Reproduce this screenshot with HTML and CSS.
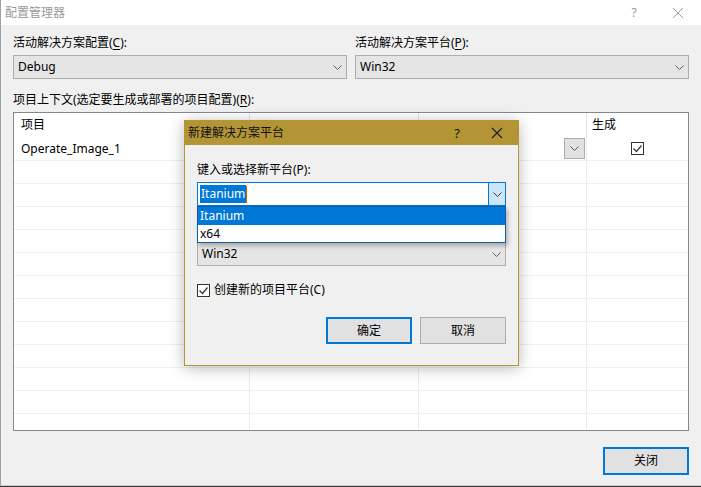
FILE: index.html
```html
<!DOCTYPE html>
<html lang="zh-CN">
<head>
<meta charset="utf-8">
<title>配置管理器</title>
<link rel="stylesheet" href="styles.css">
</head>
<body>
<div class="window">
  <div class="titlebar">
    <span class="title">配置管理器</span>
    <span class="tb-buttons">
      <span class="tb-help">?</span>
      <svg class="tb-close" width="12" height="12" viewBox="0 0 12 12"><path d="M1 1L11 11M11 1L1 11" stroke="#9a9a9a" stroke-width="1"/></svg>
    </span>
  </div>
  <div class="body">
    <div class="top-row">
      <div class="field">
        <div class="label">活动解决方案配置(<u>C</u>):</div>
        <div class="combo"><span>Debug</span><svg class="chev" width="9" height="5" viewBox="0 0 9 5"><path d="M0.5 0.5L4.5 4.5L8.5 0.5" fill="none" stroke="#606060"/></svg></div>
      </div>
      <div class="field">
        <div class="label">活动解决方案平台(<u>P</u>):</div>
        <div class="combo"><span>Win32</span><svg class="chev" width="9" height="5" viewBox="0 0 9 5"><path d="M0.5 0.5L4.5 4.5L8.5 0.5" fill="none" stroke="#606060"/></svg></div>
      </div>
    </div>
    <div class="label label-grid">项目上下文(选定要生成或部署的项目配置)(<u>R</u>):</div>
    <div class="grid">
      <div class="grow ghead">
        <div class="cell">项目</div>
        <div class="cell"></div>
        <div class="cell"></div>
        <div class="cell">生成</div>
      </div>
      <div class="grow gfirst">
        <div class="cell">Operate_Image_1</div>
        <div class="cell"></div>
        <div class="cell cell-drop"><span class="mini-drop"><svg width="9" height="5" viewBox="0 0 9 5"><path d="M0.5 0.5L4.5 4.5L8.5 0.5" fill="none" stroke="#606060"/></svg></span></div>
        <div class="cell cell-check"><span class="gcheck"><svg width="11" height="11" viewBox="0 0 11 11"><path d="M1.5 5.5L4.5 8.5L9.5 2.5" fill="none" stroke="#333" stroke-width="1.2"/></svg></span></div>
      </div>
      <div class="grow"><div class="cell"></div><div class="cell"></div><div class="cell"></div><div class="cell"></div></div>
      <div class="grow"><div class="cell"></div><div class="cell"></div><div class="cell"></div><div class="cell"></div></div>
      <div class="grow"><div class="cell"></div><div class="cell"></div><div class="cell"></div><div class="cell"></div></div>
      <div class="grow"><div class="cell"></div><div class="cell"></div><div class="cell"></div><div class="cell"></div></div>
      <div class="grow"><div class="cell"></div><div class="cell"></div><div class="cell"></div><div class="cell"></div></div>
      <div class="grow"><div class="cell"></div><div class="cell"></div><div class="cell"></div><div class="cell"></div></div>
      <div class="grow"><div class="cell"></div><div class="cell"></div><div class="cell"></div><div class="cell"></div></div>
      <div class="grow"><div class="cell"></div><div class="cell"></div><div class="cell"></div><div class="cell"></div></div>
      <div class="grow"><div class="cell"></div><div class="cell"></div><div class="cell"></div><div class="cell"></div></div>
      <div class="grow"><div class="cell"></div><div class="cell"></div><div class="cell"></div><div class="cell"></div></div>
      <div class="grow"><div class="cell"></div><div class="cell"></div><div class="cell"></div><div class="cell"></div></div>
      <div class="grow"><div class="cell"></div><div class="cell"></div><div class="cell"></div><div class="cell"></div></div>
    </div>
    <div class="footer">
      <button class="btn btn-default btn-close">关闭</button>
    </div>
  </div>

  <div class="dialog">
    <div class="dlg-title">
      <span>新建解决方案平台</span>
      <span class="dlg-tb">
        <span class="dlg-help">?</span>
        <svg width="12" height="12" viewBox="0 0 12 12"><path d="M1 1L11 11M11 1L1 11" stroke="#1a1a1a" stroke-width="1.1"/></svg>
      </span>
    </div>
    <div class="dlg-body">
      <div class="label">键入或选择新平台(P):</div>
      <div class="combo combo-edit">
        <span class="edit-text"><span class="sel">Itanium</span><span class="caret"></span></span>
        <span class="edit-btn"><svg width="9" height="5" viewBox="0 0 9 5"><path d="M0.5 0.5L4.5 4.5L8.5 0.5" fill="none" stroke="#404040"/></svg></span>
      </div>
      <div class="combo combo-copy"><span>Win32</span><svg class="chev" width="9" height="5" viewBox="0 0 9 5"><path d="M0.5 0.5L4.5 4.5L8.5 0.5" fill="none" stroke="#606060"/></svg></div>
      <label class="check-row"><span class="check"><svg width="11" height="11" viewBox="0 0 11 11"><path d="M1.5 5.5L4.5 8.5L9.5 2.5" fill="none" stroke="#333" stroke-width="1.2"/></svg></span>创建新的项目平台(C)</label>
      <div class="dlg-buttons">
        <button class="btn btn-default">确定</button>
        <button class="btn">取消</button>
      </div>
      <div class="droplist">
        <div class="opt opt-sel">Itanium</div>
        <div class="opt">x64</div>
      </div>
    </div>
  </div>
</div>
</body>
</html>
```
FILE: styles.css
```css
html, body {
  margin: 0;
  padding: 0;
  background: #3a3a3a;
}
body {
  font-family: "Segoe UI", "Noto Sans", "Noto Sans CJK SC", sans-serif;
  font-size: 12px;
  line-height: 16px;
  color: #000;
}
.window {
  position: relative;
  width: 700px;
  height: 485px;
  border-left: 1px solid #a0a0a0;
  border-bottom: 1px solid #c8c8c8;
  background: #f0f0f0;
  display: flex;
  flex-direction: column;
  overflow: hidden;
}
.titlebar {
  height: 25px;
  background: #fff;
  display: flex;
  align-items: center;
  justify-content: space-between;
  padding-left: 4px;
}
.title {
  color: #999;
  font-size: 12px;
}
.tb-buttons {
  display: flex;
  align-items: center;
}
.tb-help {
  color: #999;
  width: 20px;
  text-align: center;
  margin-right: 28px;
}
.tb-close {
  margin-right: 17px;
}
.body {
  flex: 1;
  padding: 10px 12px 0 12px;
  display: flex;
  flex-direction: column;
}
.top-row {
  display: grid;
  grid-template-columns: 334px 334px;
  column-gap: 8px;
}
.label {
  height: 16px;
  margin-bottom: 4px;
  white-space: nowrap;
}
.label u {
  text-decoration: underline;
  text-underline-offset: 2px;
}
.combo {
  height: 24px;
  box-sizing: border-box;
  border: 1px solid #adadad;
  background: #e5e5e5;
  display: flex;
  align-items: center;
  justify-content: space-between;
  padding: 0 4px 0 4px;
}
.label-grid {
  margin-top: 13px;
}
.grid {
  height: 317px;
  border: 1px solid #828790;
  background: #fff;
  overflow: hidden;
}
.grow {
  display: grid;
  grid-template-columns: 235px 169px 168px 102px;
  height: 23px;
  box-sizing: border-box;
  border-bottom: 1px solid #f0f0f0;
}
.cell {
  border-left: 1px solid #e8ecf2;
  padding-left: 6px;
  display: flex;
  align-items: center;
  overflow: hidden;
}
.cell:first-child {
  border-left: none;
}
.ghead {
  height: 24px;
  border-bottom: none;
}
.ghead .cell {
  border-left-color: #e5e5e5;
  padding-left: 5px;
}
.ghead .cell:first-child {
  padding-left: 7px;
}
.gfirst {
  height: 24px;
}
.gfirst .cell:first-child {
  padding-left: 7px;
}
.cell-drop {
  justify-content: flex-end;
  padding-right: 1px;
}
.mini-drop {
  width: 21px;
  height: 21px;
  box-sizing: border-box;
  border: 1px solid #adadad;
  background: #e1e1e1;
  display: flex;
  align-items: center;
  justify-content: center;
}
.cell-check {
  justify-content: center;
  padding-left: 0;
}
.gcheck, .check {
  width: 13px;
  height: 13px;
  box-sizing: border-box;
  border: 1px solid #333;
  background: #fff;
  display: flex;
  align-items: center;
  justify-content: center;
}
.footer {
  display: flex;
  justify-content: flex-end;
  padding-top: 16px;
}
.btn {
  width: 86px;
  height: 27px;
  box-sizing: border-box;
  border: 1px solid #adadad;
  background: #e1e1e1;
  font: inherit;
  color: #000;
  padding: 0;
}
.btn-default {
  border: 2px solid #0078d7;
}
.btn-close {
  height: 28px;
}
.dialog {
  position: absolute;
  left: 183px;
  top: 120px;
  width: 335px;
  height: 246px;
  box-sizing: border-box;
  border: 1px solid #b39536;
  background: #f0f0f0;
  box-shadow: 0 2px 14px rgba(0, 0, 0, 0.28);
  display: flex;
  flex-direction: column;
}
.dlg-title {
  height: 24px;
  background: #b39536;
  display: flex;
  align-items: center;
  justify-content: space-between;
  padding-left: 3px;
  color: #111;
}
.dlg-tb {
  display: flex;
  align-items: center;
}
.dlg-help {
  width: 20px;
  text-align: center;
  margin-right: 24px;
  font-size: 13px;
}
.dlg-tb svg {
  margin-right: 15px;
}
.dlg-body {
  position: relative;
  flex: 1;
  padding: 17px 12px 0 12px;
}
.combo-edit {
  border-color: #0078d7;
  background: #fff;
  padding: 0 0 0 2px;
  align-items: stretch;
}
.edit-text {
  display: flex;
  align-items: center;
}
.sel {
  background: #0078d7;
  color: #fff;
  padding: 1px 1px;
  line-height: 16px;
}
.caret {
  width: 1px;
  height: 17px;
  background: #c86400;
}
.edit-btn {
  width: 16px;
  border-left: 1px solid #0078d7;
  background: #cce4f7;
  display: flex;
  align-items: center;
  justify-content: center;
}
.combo-copy {
  margin-top: 36px;
}
.check-row {
  display: flex;
  align-items: center;
  gap: 4px;
  margin-top: 17px;
  height: 14px;
}
.dlg-buttons {
  display: flex;
  justify-content: flex-end;
  gap: 8px;
  margin-top: 20px;
}
.droplist {
  position: absolute;
  left: 12px;
  top: 61px;
  width: 309px;
  height: 37px;
  box-sizing: border-box;
  border: 1px solid #0f5fa8;
  background: #fff;
  box-shadow: 2px 3px 4px rgba(0, 0, 0, 0.25);
}
.opt {
  height: 18px;
  line-height: 18px;
  padding-left: 2px;
}
.opt-sel {
  background: #0078d7;
  color: #fff;
  height: 18px;
}
```
